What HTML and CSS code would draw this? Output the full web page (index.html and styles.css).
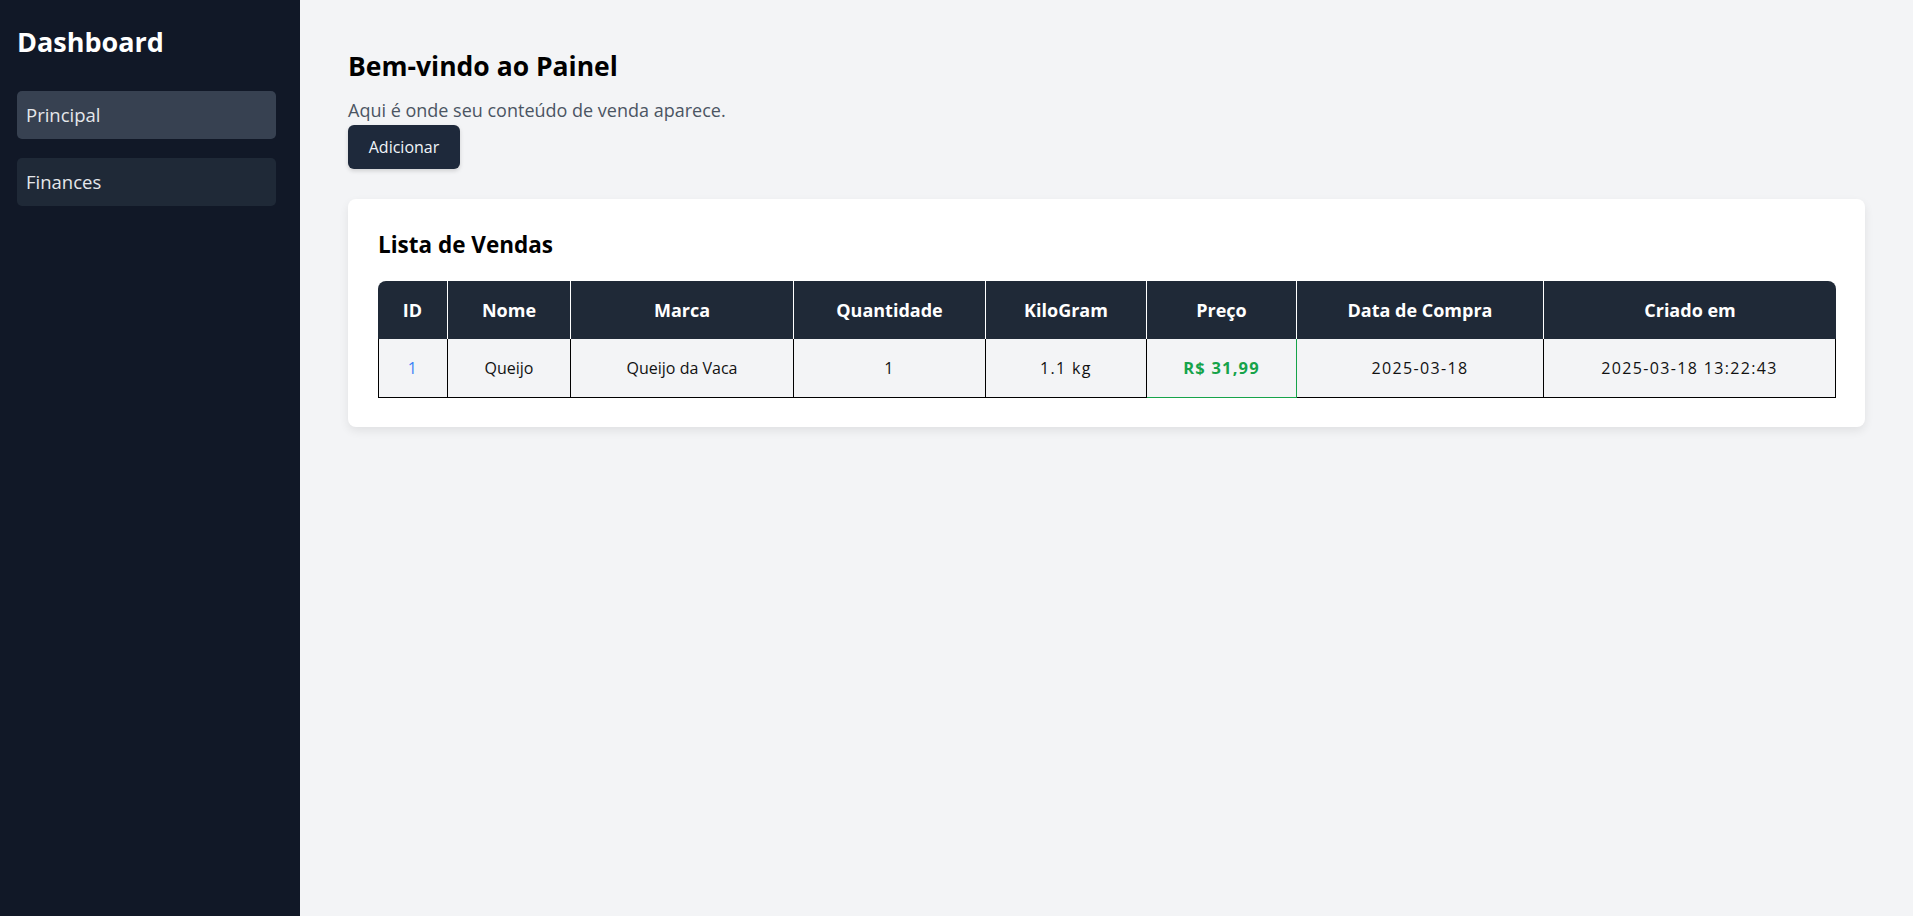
FILE: index.html
```html
<!DOCTYPE html>
<html lang="pt-BR">
<head>
<meta charset="utf-8">
<title>Dashboard</title>
<link rel="stylesheet" href="styles.css">
</head>
<body>
<div class="layout">
  <aside class="sidebar">
    <h2 class="brand">Dashboard</h2>
    <nav class="nav">
      <a class="nav-item active" href="#">Principal</a>
      <a class="nav-item" href="#">Finances</a>
    </nav>
  </aside>
  <main class="main">
    <h1 class="title">Bem-vindo ao Painel</h1>
    <p class="subtitle">Aqui é onde seu conteúdo de venda aparece.</p>
    <button class="btn">Adicionar</button>
    <section class="card">
      <h2 class="card-title">Lista de Vendas</h2>
      <table class="table">
        <colgroup>
          <col class="c-id"><col class="c-nome"><col class="c-marca"><col class="c-qtd"><col class="c-kg"><col class="c-preco"><col class="c-data"><col class="c-criado">
        </colgroup>
        <thead>
          <tr>
            <th>ID</th><th>Nome</th><th>Marca</th><th>Quantidade</th><th>KiloGram</th><th>Preço</th><th>Data de Compra</th><th>Criado em</th>
          </tr>
        </thead>
        <tbody>
          <tr>
            <td class="id num">1</td><td>Queijo</td><td>Queijo da Vaca</td><td class="num">1</td><td class="num">1.1 kg</td><td class="price">R$ 31,99</td><td class="num">2025-03-18</td><td class="num">2025-03-18 13:22:43</td>
          </tr>
        </tbody>
      </table>
    </section>
  </main>
</div>
</body>
</html>
```

FILE: styles.css
```css
* { box-sizing: border-box; }
html, body { margin: 0; padding: 0; height: 100%; }
body {
  font-family: "Open Sans", "Noto Sans", sans-serif;
  background: #f3f4f6;
  color: #111827;
}
.layout {
  display: flex;
  height: 100vh;
}
.sidebar {
  width: 300px;
  flex: 0 0 300px;
  background: #111827;
  padding: 24px 24px 24px 17px;
}
.brand {
  margin: 0;
  font-size: 27px;
  line-height: 36px;
  font-weight: 700;
  color: #ffffff;
}
.nav {
  display: flex;
  flex-direction: column;
  gap: 19px;
  margin-top: 31px;
}
.nav-item {
  display: flex;
  align-items: center;
  height: 48px;
  padding-left: 9px;
  padding-bottom: 1px;
  border-radius: 5px;
  background: #1f2937;
  color: #e5e7eb;
  text-decoration: none;
  font-size: 18.5px;
}
.nav-item.active {
  background: #374151;
}
.main {
  flex: 1;
  padding: 49px 48px 48px;
  min-width: 0;
}
.title {
  margin: 0 0 13px;
  font-size: 26.5px;
  line-height: 34px;
  font-weight: 700;
  color: #000;
}
.subtitle {
  margin: 0;
  font-size: 18px;
  line-height: 28px;
  color: #4b5563;
}
.btn {
  display: block;
  margin-top: 1px;
  width: 112px;
  height: 44px;
  border: none;
  border-radius: 6px;
  background: #1e293b;
  color: #f1f5f9;
  font-family: inherit;
  font-size: 16px;
  box-shadow: 0 2px 4px rgba(0, 0, 0, 0.15);
  cursor: pointer;
}
.card {
  margin-top: 30px;
  background: #ffffff;
  border-radius: 8px;
  padding: 32px 30px 29px;
  box-shadow: 0 4px 10px rgba(0, 0, 0, 0.08);
}
.card-title {
  margin: 0 0 22px;
  font-size: 22.5px;
  line-height: 28px;
  font-weight: 700;
  color: #000;
}
.table {
  width: 100%;
  table-layout: fixed;
  border-collapse: separate;
  border-spacing: 0;
}
.c-id { width: 70px; }
.c-nome { width: 123px; }
.c-marca { width: 223px; }
.c-qtd { width: 192px; }
.c-kg { width: 161px; }
.c-preco { width: 150px; }
.c-data { width: 247px; }
.c-criado { width: 292px; }
.table th {
  background: #1f2937;
  color: #ffffff;
  font-size: 18px;
  font-weight: 700;
  padding: 17px 4px;
  line-height: 24px;
  text-align: center;
  border-right: 1px solid #ffffff;
}
.table th:first-child { border-top-left-radius: 8px; }
.table th:last-child { border-top-right-radius: 8px; border-right: none; }
.table td {
  background: #f3f4f6;
  color: #111111;
  font-size: 16px;
  padding: 17px 4px;
  line-height: 24px;
  text-align: center;
  border-right: 1px solid #000000;
  border-bottom: 1px solid #000000;
}
.table td.num { letter-spacing: 1.35px; }
.table td:first-child { border-left: 1px solid #000000; }
.table td.id { color: #3b82f6; }
.table td.price {
  color: #16a34a;
  font-weight: 700;
  font-size: 16.5px;
  letter-spacing: 1.2px;
  border-right-color: #16a34a;
  border-bottom-color: #16a34a;
}
```
